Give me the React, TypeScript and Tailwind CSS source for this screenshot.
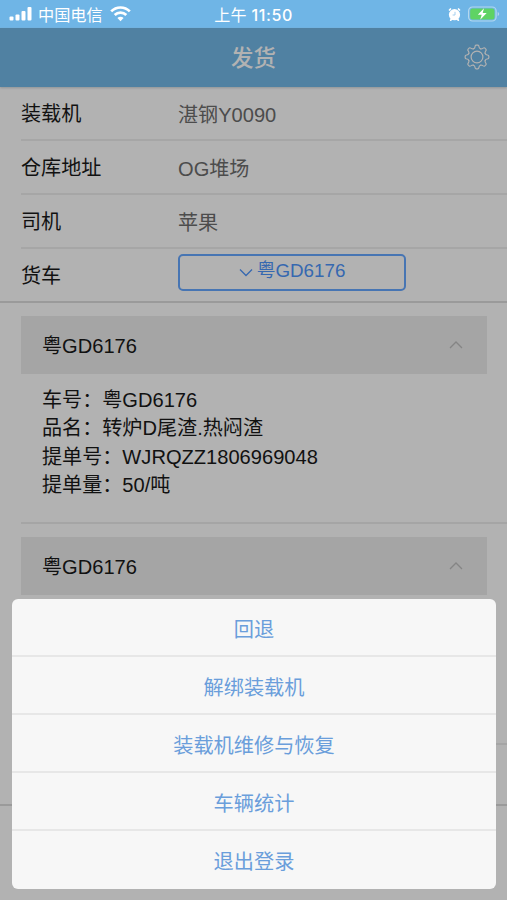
import React from 'react'

const infoRows = [
  { label: '装载机', value: '湛钢Y0090' },
  { label: '仓库地址', value: 'OG堆场' },
  { label: '司机', value: '苹果' },
]

const orders = [
  {
    plate: '粤GD6176',
    lines: ['车号：粤GD6176', '品名：转炉D尾渣.热闷渣', '提单号：WJRQZZ1806969048', '提单量：50/吨'],
  },
  { plate: '粤GD6176', lines: [] },
]

const actions = ['回退', '解绑装载机', '装载机维修与恢复', '车辆统计', '退出登录']

const gearTeeth = [0, 45, 90, 135, 180, 225, 270, 315]

const GearIcon = ({ className }: { className: string }) => (
  <svg className={className} viewBox="-13 -13 26 26" fill="none" stroke="currentColor" strokeWidth="1.200" strokeLinecap="round">
    {gearTeeth.map((angle) => (
      <path
        key={angle}
        transform={`rotate(${angle})`}
        d="M-3.400-8.200Q-2.200-8.700-2-10.200Q-1.800-11.800-1-11.800H1Q1.800-11.800 2-10.200Q2.200-8.700 3.400-8.200"
      />
    ))}
    <circle r="5.900" />
  </svg>
)

const StatusBar = () => (
  <div className="relative flex h-7 items-center justify-between bg-[#6fb5e6] pl-[9px] pr-[7px] text-white">
    <div className="flex items-center">
      <svg width="24" height="16" viewBox="0 0 24 16" fill="currentColor">
        <rect x="0.5" y="10.5" width="4" height="4" rx="1" />
        <rect x="6.500" y="8.500" width="4" height="6" rx="1" />
        <rect x="12.500" y="5" width="4" height="9.500" rx="1" />
        <rect x="18.500" y="1" width="4" height="13.500" rx="1" />
      </svg>
      <span className="ml-[5px] pt-px text-[16.2px] leading-7">中国电信</span>
      <svg className="ml-[7px]" width="21" height="16" viewBox="0 0 21 16" fill="none" stroke="currentColor" strokeWidth="2.700">
        <path d="M1.200 5.400a13 13 0 0 1 18.600 0" />
        <path d="M4.700 9a8.200 8.200 0 0 1 11.600 0" />
        <path d="M10.500 15.300l-3.100-3.300a4.400 4.400 0 0 1 6.200 0z" fill="currentColor" stroke="none" />
      </svg>
    </div>
    <span className="absolute left-1/2 top-px -translate-x-1/2 whitespace-nowrap text-[16px] leading-7 tracking-[0.2px]">
      上午<span className="font-['Inter',sans-serif] font-medium tracking-[0.6px]"> 11:50</span>
    </span>
    <div className="flex items-center">
      <svg width="13" height="15" viewBox="0 0 13 15" fill="none">
        <path d="M3.500 12l-.8 1.200M9.500 12l.8 1.200M1.500 3l1-1M11.500 3l-1-1" stroke="#fff" strokeWidth="1.700" strokeLinecap="round" />
        <circle cx="6.500" cy="7.700" r="5.600" fill="#fff" />
        <path d="M7 4.800v3.200H4.600" stroke="#a5d0ef" strokeWidth="1" />
      </svg>
      <svg className="ml-[7px]" width="32" height="16" viewBox="0 0 32 16" fill="none">
        <rect x="0.600" y="1" width="27.500" height="14" rx="4" stroke="#b4d8ef" strokeWidth="1.200" />
        <rect x="2.200" y="2.600" width="24.300" height="10.800" rx="2.500" fill="#5fd364" />
        <path d="M29.700 6v4q1.500-.6 1.500-2t-1.500-2z" fill="#b4d8ef" />
        <path d="M16 2.200L9.800 8.800h3.900l-1.500 5L18.700 7h-4z" fill="#fff" />
      </svg>
    </div>
  </div>
)

const OrderCard = ({ plate, lines }: { plate: string; lines: string[] }) => (
  <div className="ml-[21px] h-[221px] border-b-2 border-[#a5a5a5] pt-[13px]">
    <div className="mr-5 flex h-[58px] items-center justify-between bg-[#a5a5a5] pl-[21px] pr-6">
      <span className="pt-[2px]">{plate}</span>
      <svg width="14" height="8" viewBox="0 0 14 8" fill="none" stroke="#858585" strokeWidth="1.300">
        <path d="M1 7l6-6 6 6" />
      </svg>
    </div>
    <div className="pl-[21px] pt-[12px] leading-[28.4px]">
      {lines.map((line) => (
        <p key={line}>{line}</p>
      ))}
    </div>
  </div>
)

const App = () => {
  return (
    <div className="relative h-[900px] w-[507px] overflow-hidden bg-[#b2b2b2] font-['Liberation_Sans','Noto_Sans_CJK_SC',sans-serif] text-[20.1px] text-[#111]">
      <StatusBar />

      <header className="relative flex h-[59px] items-center justify-center bg-[#5081a2] pt-[2px] text-[22.5px] font-medium text-[#b2b2b2] shadow-[0_1px_2px_#8f9498]">
        发货
        <GearIcon className="absolute right-[17px] top-[16px] size-[26px]" />
      </header>

      <div className="border-b-2 border-[#9a9a9a]">
        {infoRows.map(({ label, value }) => (
          <div key={label} className="ml-[21px] flex h-[54px] items-center border-b-2 border-[#a6a6a6]">
            <span className="w-[157px] pt-[2px]">{label}</span>
            <span className="pt-[5px] text-[#4c4c4c]">{value}</span>
          </div>
        ))}
        <div className="ml-[21px] flex h-[52px] items-center">
          <span className="w-[157px] pt-[2px]">货车</span>
          <button className="mb-[5px] flex h-[37px] w-[228px] items-center justify-center rounded-[5px] border-2 border-[#4775b3] pb-[3px] text-[18.8px] text-[#3668b0]">
            <svg className="mr-[4px] mt-[3px]" width="14" height="9" viewBox="0 0 14 9" fill="none" stroke="currentColor" strokeWidth="1.300">
              <path d="M1 1.500l6 6 6-6" />
            </svg>
            <span className="pt-px">粤GD6176</span>
          </button>
        </div>
      </div>

      {orders.map((order, index) => (
        <OrderCard key={index} {...order} />
      ))}
      <div className="h-[61px] border-b-2 border-[#9a9a9a]" />

      {/* Action sheet over the dimmed page */}
      <div className="absolute left-[12px] top-[599px] h-[290px] w-[484px] divide-y-2 divide-[#e7e7e7] overflow-hidden rounded-[6px] bg-[#f7f7f7] text-[20.2px] text-[#6a9edb]">
        {actions.map((action) => (
          <button key={action} className="flex h-[58px] w-full items-center justify-center pt-[7px] last:pt-[5px]">
            {action}
          </button>
        ))}
      </div>
    </div>
  )
}

export default App
